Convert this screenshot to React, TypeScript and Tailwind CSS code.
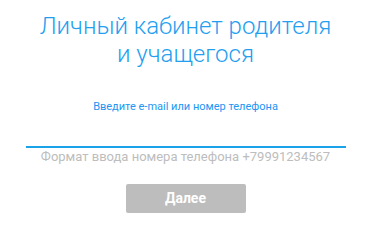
export default function App() {
    return (
        <div className="w-[371px] h-[228px] bg-white flex flex-col items-center font-['Roboto',sans-serif]">
            <h1 className="mt-[12px] text-center text-[24px] leading-[28px] font-light text-[#249ff0]">
                Личный кабинет родителя
                <br />
                и учащегося
            </h1>
            <div className="mt-[32px] w-[320px] flex flex-col">
                <label className="text-center text-[11px] leading-[14px] text-[#2196f3]">
                    Введите e-mail или номер телефона
                </label>
                <input className="mt-[18px] h-[16px] border-b-2 border-[#1aa3e8] outline-none" />
                <div className="mt-[1px] text-center text-[13px] leading-[16px] text-[#bdbdbd]">
                    Формат ввода номера телефона +79991234567
                </div>
            </div>
            <button className="mt-[19px] w-[120px] h-[29px] rounded-[2px] bg-[#bdbdbd] text-white text-[14px] font-bold">
                Далее
            </button>
        </div>
    );
}
